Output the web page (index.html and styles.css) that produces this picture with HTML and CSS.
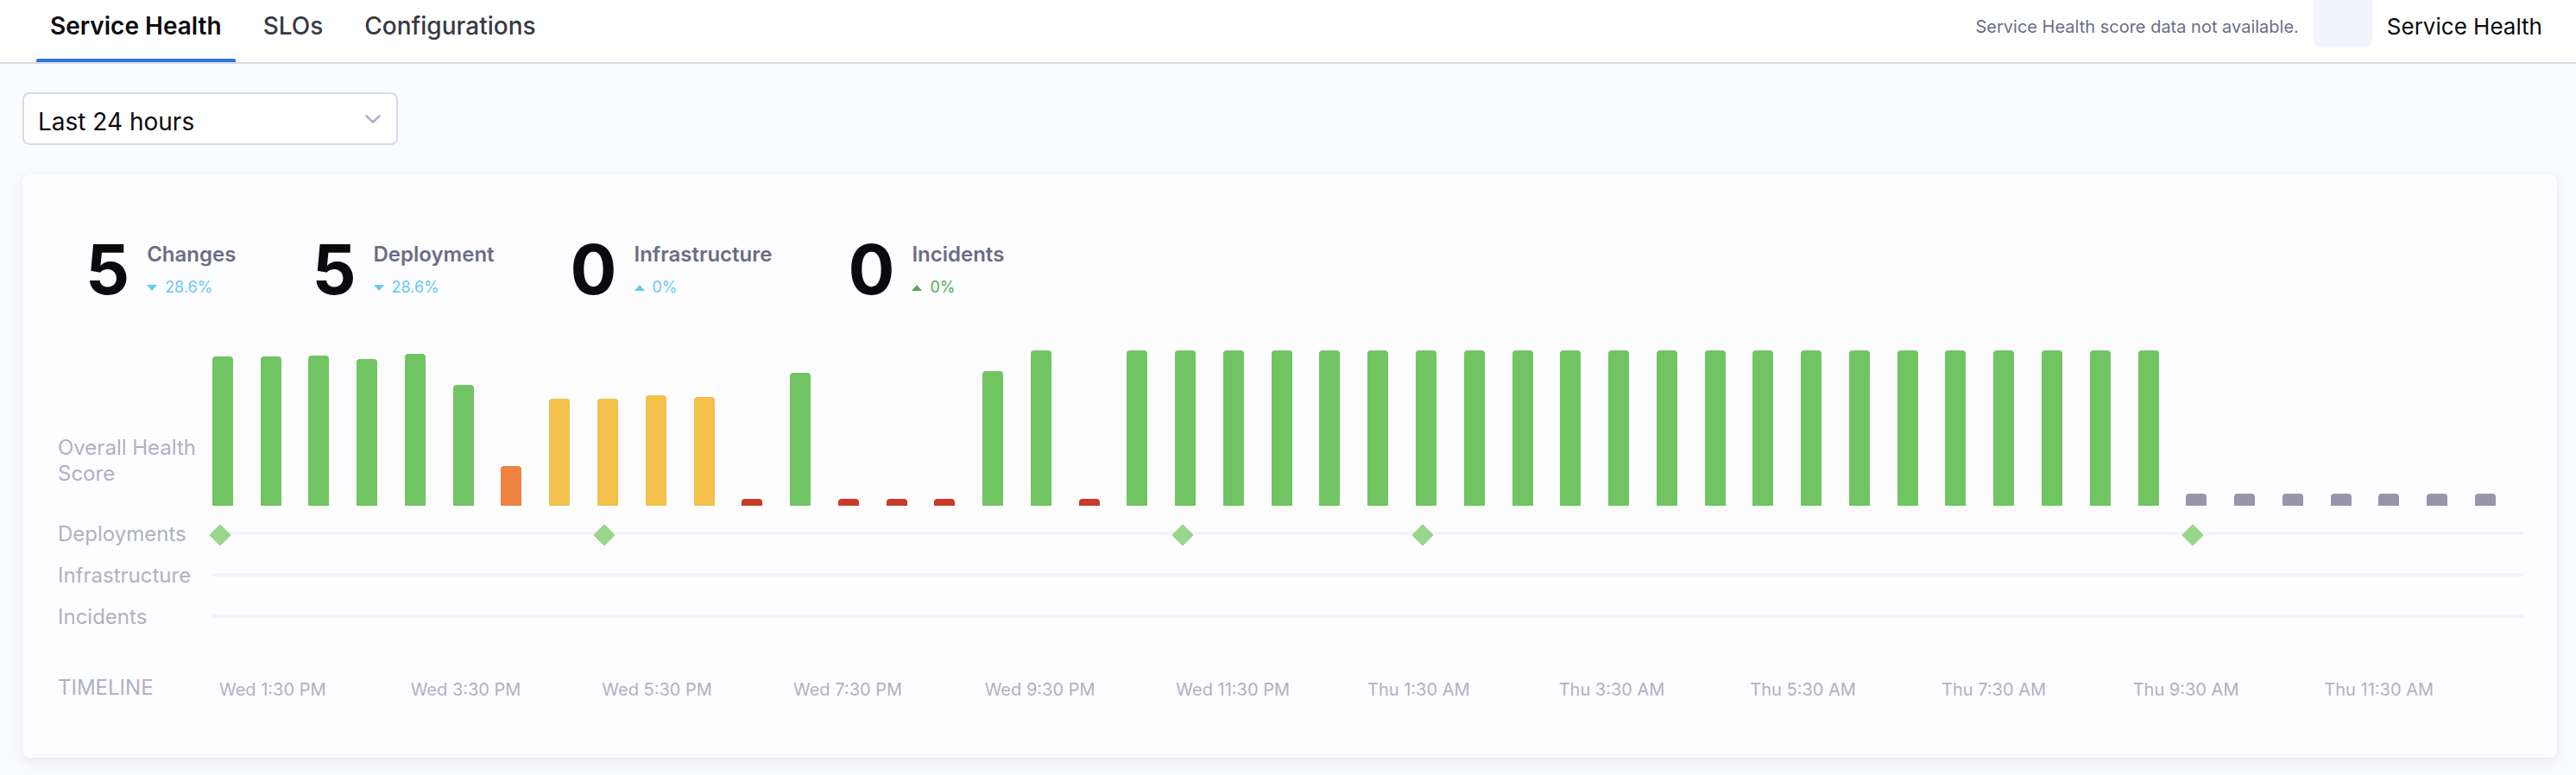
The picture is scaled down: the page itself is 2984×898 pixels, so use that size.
FILE: index.html
```html
<!DOCTYPE html>
<html lang="en">
<head>
<meta charset="utf-8">
<title>Service Health</title>
<link rel="stylesheet" href="styles.css">
</head>
<body>
<header class="topbar">
  <nav class="tabs">
    <div class="tab active"><span class="tab-text">Service Health</span></div>
    <div class="tab"><span class="tab-text">SLOs</span></div>
    <div class="tab"><span class="tab-text">Configurations</span></div>
  </nav>
  <div class="topright">
    <span class="na">Service Health score data not available.</span>
    <span class="scorebox"></span>
    <span class="sh">Service Health</span>
  </div>
</header>
<main class="page">
  <div class="select">
    <span class="select-text">Last 24 hours</span>
    <svg class="chev" width="18" height="10" viewBox="0 0 18 10"><path d="M1.5 1.5 9 8.5l7.5-7" fill="none" stroke="#b0b1c4" stroke-width="2.6" stroke-linecap="round" stroke-linejoin="round"/></svg>
  </div>
  <section class="card">
    <div class="stats">
      <div class="stat">
        <div class="num">5</div>
        <div class="stat-body">
          <div class="stat-label">Changes</div>
          <div class="stat-change blue"><svg width="12" height="7" viewBox="0 0 12 7"><path d="M0 0h12L6 7z" fill="currentColor"/></svg>28.6%</div>
        </div>
      </div>
      <div class="stat">
        <div class="num">5</div>
        <div class="stat-body">
          <div class="stat-label">Deployment</div>
          <div class="stat-change blue"><svg width="12" height="7" viewBox="0 0 12 7"><path d="M0 0h12L6 7z" fill="currentColor"/></svg>28.6%</div>
        </div>
      </div>
      <div class="stat">
        <div class="num">0</div>
        <div class="stat-body">
          <div class="stat-label">Infrastructure</div>
          <div class="stat-change blue"><svg width="12" height="7" viewBox="0 0 12 7"><path d="M6 0l6 7H0z" fill="currentColor"/></svg>0%</div>
        </div>
      </div>
      <div class="stat">
        <div class="num">0</div>
        <div class="stat-body">
          <div class="stat-label">Incidents</div>
          <div class="stat-change green"><svg width="12" height="7" viewBox="0 0 12 7"><path d="M6 0l6 7H0z" fill="currentColor"/></svg>0%</div>
        </div>
      </div>
    </div>

    <div class="chart">
      <div class="ohs-label">Overall Health Score</div>
      <div class="bars">
        <div class="col"><div class="bar g" style="height:173px"></div></div>
        <div class="col"><div class="bar g" style="height:173px"></div></div>
        <div class="col"><div class="bar g" style="height:174px"></div></div>
        <div class="col"><div class="bar g" style="height:170px"></div></div>
        <div class="col"><div class="bar g" style="height:176px"></div></div>
        <div class="col"><div class="bar g" style="height:140px"></div></div>
        <div class="col"><div class="bar o" style="height:46px"></div></div>
        <div class="col"><div class="bar y" style="height:124px"></div></div>
        <div class="col"><div class="bar y" style="height:124px"></div></div>
        <div class="col"><div class="bar y" style="height:128px"></div></div>
        <div class="col"><div class="bar y" style="height:126px"></div></div>
        <div class="col"><div class="bar r" style="height:8px"></div></div>
        <div class="col"><div class="bar g" style="height:154px"></div></div>
        <div class="col"><div class="bar r" style="height:8px"></div></div>
        <div class="col"><div class="bar r" style="height:8px"></div></div>
        <div class="col"><div class="bar r" style="height:8px"></div></div>
        <div class="col"><div class="bar g" style="height:156px"></div></div>
        <div class="col"><div class="bar g" style="height:180px"></div></div>
        <div class="col"><div class="bar r" style="height:8px"></div></div>
        <div class="col"><div class="bar g" style="height:180px"></div></div>
        <div class="col"><div class="bar g" style="height:180px"></div></div>
        <div class="col"><div class="bar g" style="height:180px"></div></div>
        <div class="col"><div class="bar g" style="height:180px"></div></div>
        <div class="col"><div class="bar g" style="height:180px"></div></div>
        <div class="col"><div class="bar g" style="height:180px"></div></div>
        <div class="col"><div class="bar g" style="height:180px"></div></div>
        <div class="col"><div class="bar g" style="height:180px"></div></div>
        <div class="col"><div class="bar g" style="height:180px"></div></div>
        <div class="col"><div class="bar g" style="height:180px"></div></div>
        <div class="col"><div class="bar g" style="height:180px"></div></div>
        <div class="col"><div class="bar g" style="height:180px"></div></div>
        <div class="col"><div class="bar g" style="height:180px"></div></div>
        <div class="col"><div class="bar g" style="height:180px"></div></div>
        <div class="col"><div class="bar g" style="height:180px"></div></div>
        <div class="col"><div class="bar g" style="height:180px"></div></div>
        <div class="col"><div class="bar g" style="height:180px"></div></div>
        <div class="col"><div class="bar g" style="height:180px"></div></div>
        <div class="col"><div class="bar g" style="height:180px"></div></div>
        <div class="col"><div class="bar g" style="height:180px"></div></div>
        <div class="col"><div class="bar g" style="height:180px"></div></div>
        <div class="col"><div class="bar g" style="height:180px"></div></div>
        <div class="col"><div class="bar n" style="height:14px"></div></div>
        <div class="col"><div class="bar n" style="height:14px"></div></div>
        <div class="col"><div class="bar n" style="height:14px"></div></div>
        <div class="col"><div class="bar n" style="height:14px"></div></div>
        <div class="col"><div class="bar n" style="height:14px"></div></div>
        <div class="col"><div class="bar n" style="height:14px"></div></div>
        <div class="col"><div class="bar n" style="height:14px"></div></div>
      </div>

      <div class="track-label first">Deployments</div>
      <div class="track first">
        <div class="line"></div>
        <span class="diamond" style="left:0.32%"></span>
        <span class="diamond" style="left:16.96%"></span>
        <span class="diamond" style="left:41.99%"></span>
        <span class="diamond" style="left:52.37%"></span>
        <span class="diamond" style="left:85.69%"></span>
      </div>

      <div class="track-label">Infrastructure</div>
      <div class="track"><div class="line"></div></div>

      <div class="track-label">Incidents</div>
      <div class="track"><div class="line"></div></div>

      <div class="timeline-label">TIMELINE</div>
      <div class="ticks">
        <span class="tick">Wed 1:30 PM</span>
        <span class="tick">Wed 3:30 PM</span>
        <span class="tick">Wed 5:30 PM</span>
        <span class="tick">Wed 7:30 PM</span>
        <span class="tick">Wed 9:30 PM</span>
        <span class="tick">Wed 11:30 PM</span>
        <span class="tick">Thu 1:30 AM</span>
        <span class="tick">Thu 3:30 AM</span>
        <span class="tick">Thu 5:30 AM</span>
        <span class="tick">Thu 7:30 AM</span>
        <span class="tick">Thu 9:30 AM</span>
        <span class="tick">Thu 11:30 AM</span>
      </div>
    </div>
  </section>
</main>
</body>
</html>
```
FILE: styles.css
```css
* { box-sizing: border-box; }

body {
  margin: 0;
  background: #fafbfe;
  font-family: Inter, "Noto Sans", "Liberation Sans", sans-serif;
  color: #0b0b0d;
}

/* ---------- top bar ---------- */
.topbar {
  display: flex;
  justify-content: space-between;
  height: 74px;
  background: #ffffff;
  border-bottom: 2px solid #d9dae6;
  padding: 0 39px 0 42px;
}

.tabs {
  display: flex;
  gap: 16px;
}

.tab {
  display: flex;
  flex-direction: column;
  justify-content: space-between;
  height: 72px;
  padding-top: 13px;
  font-size: 28px;
  line-height: 34px;
  font-weight: 500;
  color: #383946;
}

.tab-text {
  padding: 0 16px;
}

.tab::after {
  content: "";
  display: block;
  height: 4px;
  border-radius: 2px 2px 0 0;
}

.tab.active {
  font-weight: 600;
  color: #0b0b0d;
}

.tab.active::after {
  background: #2f78d6;
}

.topright {
  display: flex;
  align-items: flex-start;
}

.na {
  margin-top: 19px;
  font-size: 20px;
  line-height: 24px;
  color: #6b6d85;
}

.scorebox {
  width: 68px;
  height: 55px;
  margin: 0 17px;
  background: #f3f3fa;
  border-radius: 0 0 8px 8px;
}

.sh {
  margin-top: 16px;
  font-size: 26px;
  line-height: 30px;
  color: #0b0b0d;
}

/* ---------- page ---------- */
.page {
  padding: 33px 22px 20px 26px;
}

.select {
  display: flex;
  align-items: center;
  justify-content: space-between;
  width: 435px;
  height: 61px;
  padding: 6px 18px 0 16px;
  background: #ffffff;
  border: 2px solid #d9dae5;
  border-radius: 8px;
  font-size: 28px;
  line-height: 32px;
  color: #0b0b0d;
}

.chev {
  margin-top: -6px;
}

.card {
  margin-top: 34px;
  padding: 70px 39px 67px 41px;
  background: #fdfdff;
  border-radius: 8px;
  box-shadow: 0 0 1px rgba(40, 41, 61, 0.08), 0 4px 14px rgba(96, 97, 112, 0.12);
}

/* ---------- stats ---------- */
.stats {
  display: flex;
  gap: 88px;
  margin-left: 32px;
}

.stat {
  display: flex;
  gap: 20px;
}

.num {
  font-size: 80px;
  line-height: 80px;
  font-weight: 700;
  color: #0b0b0d;
}

.stat-body {
  padding-top: 9px;
}

.stat-label {
  font-size: 24px;
  line-height: 28px;
  font-weight: 600;
  color: #6b6d85;
}

.stat-change {
  display: flex;
  align-items: center;
  gap: 9px;
  margin-top: 13px;
  font-size: 18px;
  line-height: 22px;
}

.stat-change.blue { color: #6ac8f2; }
.stat-change.green { color: #4fab55; }

/* ---------- chart ---------- */
.chart {
  display: grid;
  grid-template-columns: 163px 1fr;
  margin-top: 54px;
}

.ohs-label {
  align-self: end;
  padding-bottom: 22px;
  font-size: 24px;
  line-height: 30px;
  color: #b0b1c4;
}

.bars {
  display: flex;
  align-items: flex-end;
  height: 180px;
  margin-right: 16px;
}

.col {
  flex: 1;
  display: flex;
  justify-content: center;
  align-items: flex-end;
  height: 100%;
}

.bar {
  width: 24px;
  border-radius: 4px 4px 0 0;
}

.bar.g { background: #70c562; }
.bar.o { background: #ef8241; }
.bar.y { background: #f3c04b; }
.bar.r { background: #c83a29; }
.bar.n { background: #9695ab; }

.track-label {
  display: flex;
  align-items: center;
  height: 48px;
  font-size: 24px;
  color: #b0b1c4;
  white-space: nowrap;
}

.track {
  position: relative;
  display: flex;
  align-items: center;
  height: 48px;
  margin-left: 16px;
}

.track-label.first,
.track.first {
  margin-top: 8px;
}

.line {
  width: 100%;
  height: 4px;
  background: #f3f3f8;
  border-radius: 2px;
}

.diamond {
  position: absolute;
  top: calc(50% + 2px);
  width: 18px;
  height: 18px;
  background: #98d68b;
  border-radius: 1px;
  transform: translate(-50%, -50%) rotate(45deg);
}

.timeline-label {
  margin-top: 44px;
  font-size: 24px;
  line-height: 29px;
  color: #b0b1c4;
}

.ticks {
  display: grid;
  grid-template-columns: repeat(12, 1fr);
  margin: 49px 9px 0 24px;
}

.tick {
  white-space: nowrap;
  font-size: 20px;
  line-height: 24px;
  color: #b0b1c4;
}
```
